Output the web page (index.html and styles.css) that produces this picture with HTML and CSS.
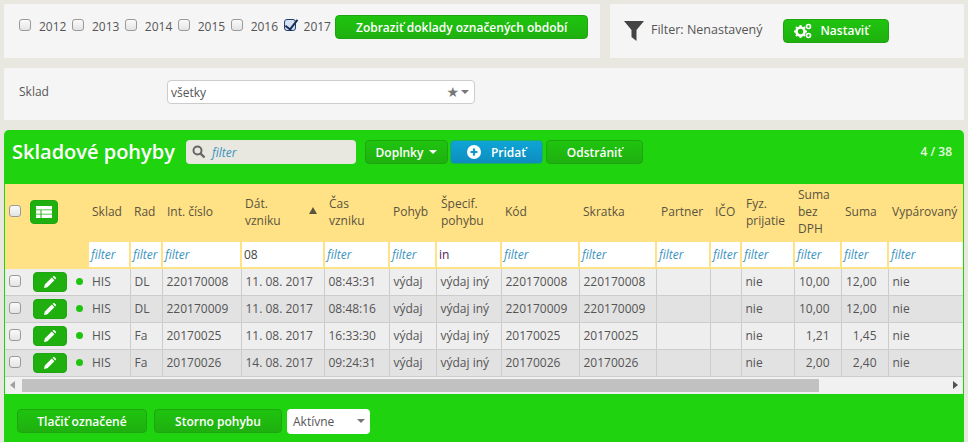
FILE: index.html
```html
<!DOCTYPE html>
<html lang="sk">
<head>
    <meta charset="UTF-8">
    <title>Skladové pohyby</title>
    <link rel="stylesheet" href="styles.css">
</head>
<body>
    <div class="top-row">
        <div class="panel years">
            <label class="year"><input type="checkbox"><span>2012</span></label>
            <label class="year"><input type="checkbox"><span>2013</span></label>
            <label class="year"><input type="checkbox"><span>2014</span></label>
            <label class="year"><input type="checkbox"><span>2015</span></label>
            <label class="year"><input type="checkbox"><span>2016</span></label>
            <label class="year"><input type="checkbox" checked><span>2017</span></label>
            <button class="btn btn-period">Zobraziť doklady označených období</button>
        </div>
        <div class="panel filter-panel">
            <svg class="funnel" viewBox="0 0 20 20"><path d="M0 0h20l-7.500 9v11l-5-4v-7z"/></svg>
            <span class="filter-state">Filter: Nenastavený</span>
            <button class="btn btn-set">
                <svg class="cogs" viewBox="0 0 18 16">
                    <circle cx="6.500" cy="8.500" r="4" fill="none" stroke="#fff" stroke-width="2.600"/>
                    <path d="M6.500 2v2M6.500 13v2M0 8.500h2M11 8.500h2M2 4l1.500 1.500M11 4L9.500 5.500M2 13l1.500-1.500M11 13l-1.500-1.500" stroke="#fff" stroke-width="2"/>
                    <circle cx="14.500" cy="3.500" r="2" fill="none" stroke="#fff" stroke-width="1.600"/>
                    <circle cx="14.500" cy="12.500" r="2" fill="none" stroke="#fff" stroke-width="1.600"/>
                </svg>
                Nastaviť
            </button>
        </div>
    </div>

    <div class="panel store-panel">
        <span class="store-label">Sklad</span>
        <div class="store-select">
            <span class="store-value">všetky</span>
            <span class="star">★</span>
            <span class="caret"></span>
        </div>
    </div>

    <div class="box">
        <div class="box-head">
            <h1>Skladové pohyby</h1>
            <div class="search">
                <svg class="search-icon" viewBox="0 0 14 14"><circle cx="5.500" cy="5.500" r="4" fill="none" stroke="#666" stroke-width="2"/><path d="M8.500 8.500l4 4" stroke="#666" stroke-width="2.400"/></svg>
                <span class="hint">filter</span>
            </div>
            <button class="btn btn-more">Doplnky <span class="caret caret-white"></span></button>
            <button class="btn btn-add">
                <svg class="plus" viewBox="0 0 14 14"><circle cx="7" cy="7" r="7" fill="#fff"/><path d="M7 3.500v7M3.500 7h7" stroke="#0e95c6" stroke-width="2.200"/></svg>
                Pridať
            </button>
            <button class="btn btn-remove">Odstrániť</button>
            <span class="count">4 / 38</span>
        </div>

        <div class="table-wrap">
            <table class="grid">
                <colgroup>
                    <col class="c-check"><col class="c-edit"><col class="c-sklad"><col class="c-rad"><col class="c-int">
                    <col class="c-dat"><col class="c-cas"><col class="c-pohyb"><col class="c-spec"><col class="c-kod">
                    <col class="c-skr"><col class="c-part"><col class="c-ico"><col class="c-fyz"><col class="c-bez">
                    <col class="c-suma"><col class="c-vyp">
                </colgroup>
                <thead>
                    <tr class="head-row">
                        <th><input type="checkbox"></th>
                        <th><span class="grid-btn"><svg viewBox="0 0 16 12"><path d="M0 0h16v3.400H0zM0 4.300h4.500v3.400H0zM5.500 4.300H16v3.400H5.500zM0 8.600h4.500V12H0zM5.500 8.600H16V12H5.500z" fill="#fff"/></svg></span></th>
                        <th>Sklad</th>
                        <th>Rad</th>
                        <th class="wide">Int. číslo</th>
                        <th class="sorted">Dát.<br>vzniku<span class="sort-mark"></span></th>
                        <th class="wide">Čas<br>vzniku</th>
                        <th>Pohyb</th>
                        <th class="wide">Špecif.<br>pohybu</th>
                        <th>Kód</th>
                        <th>Skratka</th>
                        <th class="wide">Partner</th>
                        <th class="wide">IČO</th>
                        <th class="wide">Fyz.<br>prijatie</th>
                        <th>Suma<br>bez<br>DPH</th>
                        <th>Suma</th>
                        <th>Vypárovaný</th>
                    </tr>
                    <tr class="filter-row">
                        <th></th>
                        <th></th>
                        <th class="f"><span class="hint">filter</span></th>
                        <th class="f"><span class="hint">filter</span></th>
                        <th class="f"><span class="hint">filter</span></th>
                        <th class="f"><span class="typed">08</span></th>
                        <th class="f"><span class="hint">filter</span></th>
                        <th class="f"><span class="hint">filter</span></th>
                        <th class="f"><span class="typed typed-purple">in</span></th>
                        <th class="f"><span class="hint">filter</span></th>
                        <th class="f"><span class="hint">filter</span></th>
                        <th class="f"><span class="hint">filter</span></th>
                        <th class="f"><span class="hint">filter</span></th>
                        <th class="f"><span class="hint">filter</span></th>
                        <th class="f"><span class="hint">filter</span></th>
                        <th class="f"><span class="hint">filter</span></th>
                        <th class="f"><span class="hint">filter</span></th>
                    </tr>
                </thead>
                <tbody>
                    <tr>
                        <td class="plain"><input type="checkbox"></td>
                        <td class="plain edit-cell"><span class="edit-btn"><svg viewBox="0 0 12 12"><path d="M0 12l.8-3.400L7.800 1.600l2.600 2.600-7 7zM8.600.8l.6-.6a1 1 0 0 1 1.300 0l1.300 1.300a1 1 0 0 1 0 1.300l-.6.600z" fill="#fff"/></svg></span><i class="dot"></i></td>
                        <td class="plain">HIS</td><td>DL</td><td>220170008</td><td>11. 08. 2017</td><td>08:43:31</td><td>výdaj</td><td>výdaj iný</td><td>220170008</td><td>220170008</td><td></td><td></td><td>nie</td><td class="num">10,00</td><td class="num">12,00</td><td>nie</td>
                    </tr>
                    <tr>
                        <td class="plain"><input type="checkbox"></td>
                        <td class="plain edit-cell"><span class="edit-btn"><svg viewBox="0 0 12 12"><path d="M0 12l.8-3.400L7.800 1.600l2.600 2.600-7 7zM8.600.8l.6-.6a1 1 0 0 1 1.300 0l1.300 1.300a1 1 0 0 1 0 1.300l-.6.600z" fill="#fff"/></svg></span><i class="dot"></i></td>
                        <td class="plain">HIS</td><td>DL</td><td>220170009</td><td>11. 08. 2017</td><td>08:48:16</td><td>výdaj</td><td>výdaj iný</td><td>220170009</td><td>220170009</td><td></td><td></td><td>nie</td><td class="num">10,00</td><td class="num">12,00</td><td>nie</td>
                    </tr>
                    <tr>
                        <td class="plain"><input type="checkbox"></td>
                        <td class="plain edit-cell"><span class="edit-btn"><svg viewBox="0 0 12 12"><path d="M0 12l.8-3.400L7.800 1.600l2.600 2.600-7 7zM8.600.8l.6-.6a1 1 0 0 1 1.300 0l1.300 1.300a1 1 0 0 1 0 1.300l-.6.600z" fill="#fff"/></svg></span><i class="dot"></i></td>
                        <td class="plain">HIS</td><td>Fa</td><td>20170025</td><td>11. 08. 2017</td><td>16:33:30</td><td>výdaj</td><td>výdaj iný</td><td>20170025</td><td>20170025</td><td></td><td></td><td>nie</td><td class="num">1,21</td><td class="num">1,45</td><td>nie</td>
                    </tr>
                    <tr>
                        <td class="plain"><input type="checkbox"></td>
                        <td class="plain edit-cell"><span class="edit-btn"><svg viewBox="0 0 12 12"><path d="M0 12l.8-3.400L7.800 1.600l2.600 2.600-7 7zM8.600.8l.6-.6a1 1 0 0 1 1.300 0l1.300 1.300a1 1 0 0 1 0 1.300l-.6.600z" fill="#fff"/></svg></span><i class="dot"></i></td>
                        <td class="plain">HIS</td><td>Fa</td><td>20170026</td><td>14. 08. 2017</td><td>09:24:31</td><td>výdaj</td><td>výdaj iný</td><td>20170026</td><td>20170026</td><td></td><td></td><td>nie</td><td class="num">2,00</td><td class="num">2,40</td><td>nie</td>
                    </tr>
                </tbody>
            </table>
        </div>
        <div class="scrollbar">
            <span class="arrow arrow-left"></span>
            <div class="track"><div class="thumb"></div></div>
            <span class="arrow arrow-right"></span>
        </div>

        <div class="box-foot">
            <button class="btn btn-print">Tlačiť označené</button>
            <button class="btn btn-storno">Storno pohybu</button>
            <div class="state-select">Aktívne<span class="caret"></span></div>
        </div>
    </div>
</body>
</html>
```

FILE: styles.css
```css
* {
    box-sizing: border-box;
}
html, body {
    height: 442px;
    overflow: hidden;
}
body {
    margin: 0;
    padding: 4px;
    background: #e8e8e0;
    font-family: "Open Sans", sans-serif;
    font-size: 12px;
    color: #555;
}
input[type="checkbox"] {
    appearance: none;
    position: relative;
    width: 12px;
    height: 12px;
    margin: 0;
    flex: none;
    display: block;
    border: 1px solid #9a9a9a;
    border-radius: 3px;
    background: linear-gradient(#fafafa, #e4e4e4);
}
input[type="checkbox"]:checked {
    border-color: #23406e;
    background: #d5e2f2;
}
input[type="checkbox"]:checked::after {
    content: "";
    position: absolute;
    left: 3px;
    top: -3px;
    width: 5px;
    height: 11px;
    border-right: 2.500px solid #1c2f55;
    border-bottom: 2.500px solid #1c2f55;
    transform: rotate(38deg);
}
.panel {
    background: #f5f5f5;
}
.top-row {
    display: flex;
    gap: 10px;
    height: 54px;
}

/* years */
.years {
    width: 596px;
    display: flex;
    align-items: flex-start;
    padding: 11px 12px 0 15px;
}
.year {
    display: flex;
    align-items: center;
    height: 24px;
    width: 53px;
    gap: 8px;
}
.year input {
    margin-top: -4px;
}
.year span {
    margin-top: -2px;
}
.years .btn-period {
    width: 253px;
    margin-left: -1px;
}

/* buttons */
.btn {
    height: 24px;
    border: 1px solid #1da610;
    border-radius: 4px;
    background: linear-gradient(#1fc40f, #1fb00f);
    color: #fff;
    font-family: inherit;
    font-size: 12px;
    font-weight: 600;
    padding: 0;
    display: inline-flex;
    align-items: center;
    justify-content: center;
}

/* filter panel */
.filter-panel {
    flex: 1;
    display: flex;
    align-items: center;
    padding: 0 0 4px 14px;
}
.funnel {
    width: 20px;
    height: 20px;
    fill: #444;
    margin-top: 4px;
}
.filter-state {
    margin-left: 7px;
    font-size: 12.500px;
}
.btn-set {
    width: 106px;
    margin-left: 21px;
    margin-top: 3px;
    gap: 8px;
    justify-content: flex-start;
    padding-left: 10px;
}
.cogs {
    width: 18px;
    height: 16px;
}

/* store */
.store-panel {
    height: 52px;
    margin-top: 10px;
    display: flex;
    align-items: center;
    padding: 0 0 6px 15px;
}
.store-label {
    width: 148px;
}
.store-select {
    width: 308px;
    height: 24px;
    margin-top: 2px;
    background: #fff;
    border: 1px solid #ccc;
    border-radius: 4px;
    display: flex;
    align-items: center;
    padding: 0 5px 0 3px;
}
.store-value {
    flex: 1;
}
.star {
    color: #777;
    font-size: 14px;
    font-family: "DejaVu Sans", sans-serif;
    margin-right: 2px;
}
.caret {
    width: 0;
    height: 0;
    border-left: 4px solid transparent;
    border-right: 4px solid transparent;
    border-top: 4px solid #777;
}
.caret-white {
    border-top-color: #fff;
    margin-left: 6px;
}

/* green box */
.box {
    margin-top: 10px;
    width: 960px;
    height: 320px;
    background: #1fd30f;
    border-radius: 5px 5px 0 0;
    padding: 0 1px;
}
.box-head {
    height: 54px;
    display: flex;
    align-items: flex-start;
    padding: 10px 11px 0 7px;
}
.box-head h1 {
    margin: 0;
    width: 174px;
    color: #fff;
    font-size: 20px;
    line-height: 24px;
    font-weight: 600;
}
.search {
    width: 170px;
    height: 24px;
    background: #e8e8e0;
    border-radius: 4px;
    display: flex;
    align-items: center;
    padding-left: 6px;
    gap: 6px;
    margin-right: 9px;
}
.search-icon {
    width: 14px;
    height: 14px;
}
.hint {
    color: #3a93c0;
    font-style: italic;
}
.btn-more {
    width: 83px;
    margin-right: 2px;
}
.btn-add {
    width: 93px;
    margin-right: 3px;
    gap: 10px;
    background: linear-gradient(#0ea5d6, #0e8dbf);
    border-color: #1cae5a;
}
.plus {
    width: 14px;
    height: 14px;
}
.btn-remove {
    width: 97px;
}
.count {
    margin-left: auto;
    line-height: 24px;
    color: #e6ffe0;
    font-weight: 600;
}

/* table */
.table-wrap {
    overflow: hidden;
    background: #ffe285;
}
.grid {
    border-collapse: collapse;
    table-layout: fixed;
    width: 1100px;
}
.c-check { width: 21px; }
.c-edit { width: 62px; }
.c-sklad { width: 42px; }
.c-rad { width: 32px; }
.c-int { width: 79px; }
.c-dat { width: 83px; }
.c-cas { width: 65px; }
.c-pohyb { width: 47px; }
.c-spec { width: 65px; }
.c-kod { width: 78px; }
.c-skr { width: 77px; }
.c-part { width: 54px; }
.c-ico { width: 31px; }
.c-fyz { width: 53px; }
.c-bez { width: 47px; }
.c-suma { width: 47px; }
.c-vyp { width: 217px; }

.head-row th {
    height: 58px;
    padding: 0 2px 3px 4px;
    font-weight: 400;
    text-align: left;
    color: #5b5340;
    line-height: 17px;
    white-space: nowrap;
}
.head-row th.wide {
    padding-left: 5px;
}
.head-row th:first-child {
    padding: 0 0 4px 4px;
}
.head-row th:nth-child(2) {
    padding: 0 0 2px 4px;
}
.sorted {
    position: relative;
}
.sort-mark {
    position: absolute;
    right: 7px;
    top: 23px;
    border-left: 4px solid transparent;
    border-right: 4px solid transparent;
    border-bottom: 7px solid #5b5340;
}
.grid-btn {
    display: flex;
    align-items: center;
    justify-content: center;
    width: 28px;
    height: 24px;
    background: #1fb00f;
    border: 1px solid #1da610;
    border-radius: 4px;
}
.grid-btn svg {
    width: 16px;
    height: 12px;
}
.filter-row th {
    height: 26px;
    padding: 0 0 1px 2px;
    text-align: left;
    font-weight: 400;
    border-bottom: 2px solid #ffe285;
    overflow: hidden;
    white-space: nowrap;
}
.filter-row .f {
    background: #fff;
    border-left: 2px solid #ffe285;
}
.typed {
    color: #444;
}
.typed-purple {
    color: #4a1a5a;
}
.grid td {
    height: 27px;
    padding: 0 4px;
    background: #eeeeee;
    border-left: 1px solid #ccc;
    border-bottom: 1px solid #ccc;
    white-space: nowrap;
}
.grid tr:nth-child(even) td {
    background: #e2e2e2;
}
.grid td.plain {
    border-left: none;
}
.grid td:first-child {
    padding: 0 0 2px 4px;
}
.grid td.num {
    text-align: right;
    padding-right: 11px;
}
.grid td.edit-cell {
    padding: 0 0 0 7px;
}
.edit-btn {
    display: inline-flex;
    align-items: center;
    justify-content: center;
    width: 34px;
    height: 20px;
    background: #1fb00f;
    border: 1px solid #1da610;
    border-radius: 4px;
    vertical-align: middle;
}
.edit-btn svg {
    width: 12px;
    height: 12px;
}
.dot {
    display: inline-block;
    width: 7px;
    height: 7px;
    border-radius: 50%;
    background: #1fc40f;
    margin-left: 9px;
    vertical-align: middle;
}

/* scrollbar */
.scrollbar {
    height: 17px;
    background: #f1f1f1;
    display: flex;
    align-items: center;
}
.track {
    flex: 1;
    height: 13px;
}
.thumb {
    width: 797px;
    height: 100%;
    margin-left: 2px;
    background: #c1c1c1;
}
.arrow {
    width: 0;
    height: 0;
    border-top: 4px solid transparent;
    border-bottom: 4px solid transparent;
    margin: 0 5px;
}
.arrow-left {
    border-right: 5px solid #a0a0a0;
}
.arrow-right {
    border-left: 5px solid #505050;
}

/* foot */
.box-foot {
    display: flex;
    align-items: center;
    gap: 7px;
    padding: 15px 0 0 12px;
}
.btn-print {
    width: 130px;
}
.btn-storno {
    width: 128px;
}
.state-select {
    width: 83px;
    height: 25px;
    margin-left: -2px;
    background: #fff;
    border-radius: 4px;
    display: flex;
    align-items: center;
    justify-content: space-between;
    padding: 0 5px 0 6px;
}
```
